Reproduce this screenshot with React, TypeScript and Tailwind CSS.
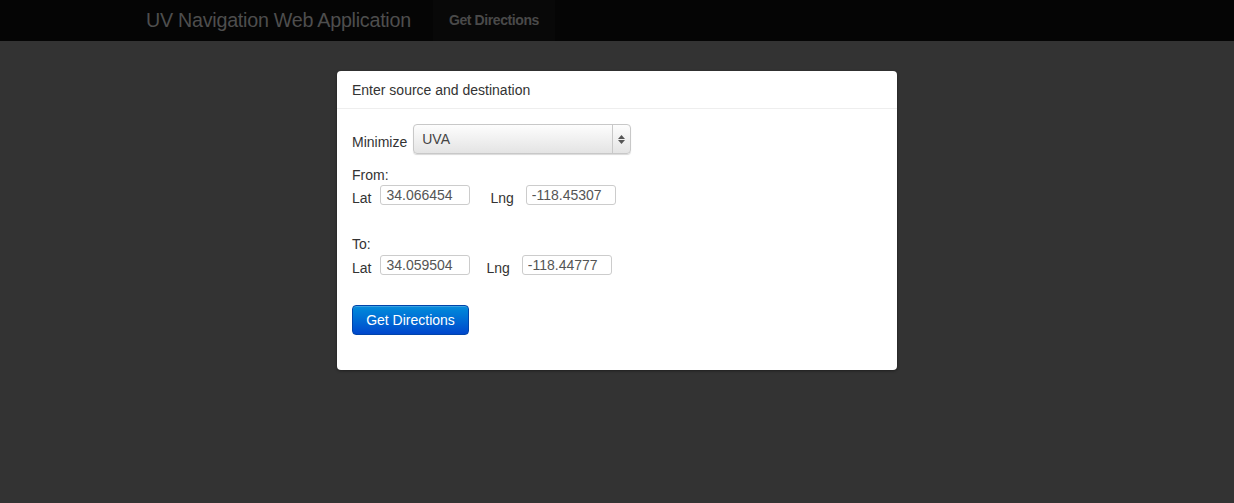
import React from 'react'

function CoordRow({ lat, lng, gap }: { lat: string; lng: string; gap: string }) {
  return (
    <div className="flex items-end h-[20px]">
      <span className="text-[14px] leading-[18px] text-[#333] -mb-[2px]">Lat</span>
      <input
        readOnly
        value={lat}
        className="ml-[9px] w-[90px] h-[20px] border border-[#ccc] rounded-[3px] px-[5px] text-[14px] leading-[18px] text-[#555] bg-white outline-none"
      />
      <span className={`${gap} text-[14px] leading-[18px] text-[#333] -mb-[2px]`}>Lng</span>
      <input
        readOnly
        value={lng}
        className="ml-[12px] w-[90px] h-[20px] border border-[#ccc] rounded-[3px] px-[5px] text-[14px] leading-[18px] text-[#555] bg-white outline-none"
      />
    </div>
  )
}

export default function App() {
  return (
    <div className="min-h-[503px] bg-[#333] font-['Liberation_Sans',Arial,sans-serif]">
      {/* Navbar */}
      <nav className="h-[41px] bg-[#050505]">
        <div className="w-[942px] mx-auto flex items-center h-full">
          <span className="text-[19.7px] leading-[41px] text-[#4e4e4e] tracking-[-0.25px]">UV Navigation Web Application</span>
          <a className="ml-[22px] h-full px-[16px] flex items-center bg-[#080808] text-[14px] font-bold text-[#4a4a4a] tracking-[-0.4px]">
            Get Directions
          </a>
        </div>
      </nav>

      {/* Card */}
      <div className="w-[560px] mx-auto mt-[30px] bg-white rounded-[4px] shadow-[0_1px_3px_rgba(0,0,0,0.4)]">
        <div className="h-[38px] px-[15px] pt-[2px] flex items-center border-b border-[#eee] text-[14px] text-[#333]">
          Enter source and destination
        </div>
        <div className="px-[15px] pt-[15px] pb-[35px] text-[14px] text-[#333]">
          <div className="flex items-center">
            <span className="leading-[18px] mt-[6px]">Minimize</span>
            <div className="ml-[6px] w-[218px] h-[30px] flex items-center border border-[#c8c8c8] rounded-[4px] bg-gradient-to-b from-[#fdfdfd] to-[#e4e4e4] shadow-[0_1px_1px_rgba(0,0,0,0.15)]">
              <span className="flex-1 pl-[8px] text-[#444]">UVA</span>
              <div className="w-[18px] h-full border-l border-[#c8c8c8] flex flex-col items-center justify-center gap-[1px]">
                <svg width="7" height="4" viewBox="0 0 7 4"><path d="M3.5 0L7 4H0z" fill="#555" /></svg>
                <svg width="7" height="4" viewBox="0 0 7 4"><path d="M0 0h7L3.5 4z" fill="#555" /></svg>
              </div>
            </div>
          </div>

          <div className="mt-[12px] leading-[18px]">From:</div>
          <div className="mt-[1px]">
            <CoordRow lat="34.066454" lng="-118.45307" gap="ml-[20px]" />
          </div>

          <div className="mt-[30px] leading-[18px]">To:</div>
          <div className="mt-[2px]">
            <CoordRow lat="34.059504" lng="-118.44777" gap="ml-[16px]" />
          </div>

          <button className="mt-[30px] w-[117px] h-[30px] rounded-[4px] border border-[#0044aa] bg-gradient-to-b from-[#0a8cdb] to-[#0046cc] text-white text-[14px] shadow-[inset_0_1px_0_rgba(255,255,255,0.2)]">
            Get Directions
          </button>
        </div>
      </div>
    </div>
  )
}
